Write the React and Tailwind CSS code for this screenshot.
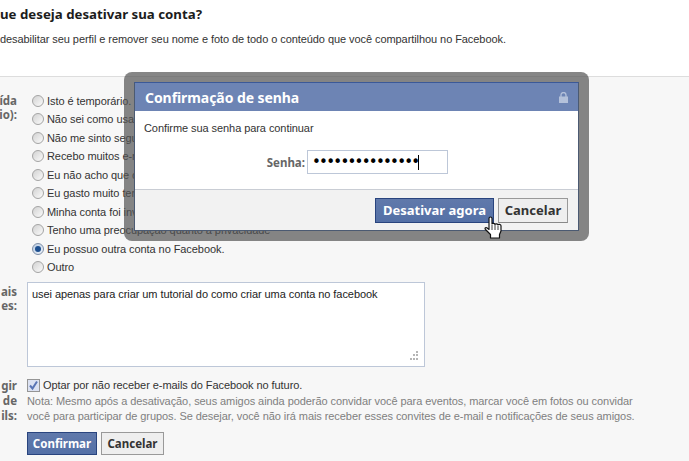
import React from "react";

const reasons = [
  "Isto é temporário. Voltarei.",
  "Não sei como usar o Facebook.",
  "Não me sinto seguro no Facebook.",
  "Recebo muitos e-mails, convites e solicitações.",
  "Eu não acho que o Facebook é útil.",
  "Eu gasto muito tempo usando o Facebook.",
  "Minha conta foi invadida.",
  "Tenho uma preocupação quanto à privacidade",
  "Eu possuo outra conta no Facebook.",
  "Outro",
];

function Radio({ checked }) {
  return (
    <span
      className={
        checked
          ? "w-[12px] h-[12px] rounded-full border border-[#7f8fa6] bg-gradient-to-br from-[#b9cbe2] to-[#eef3fa] flex items-center justify-center shrink-0"
          : "w-[12px] h-[12px] rounded-full border border-[#a4a4a4] bg-gradient-to-br from-[#d2d2d2] to-[#fbfbfb] flex items-center justify-center shrink-0"
      }
    >
      {checked && <span className="w-[6px] h-[6px] rounded-full bg-[#1c4f8f] block" />}
    </span>
  );
}

function HandCursor() {
  return (
    <svg width="19" height="23" viewBox="0 0 19 23" className="absolute left-[484px] top-[216px]">
      <path
        d="M5 2.500a1.500 1.500 0 0 1 3 0V8c0-1 3-1 3 .5 0-1 3-1 3 .5 0-1 3-.8 3 .8V15l-1.500 3.500V22H6.500V18.500L1.500 13.500c-1-1.200 0-2.500 1.300-1.700L5 13.500z"
        fill="#fff"
        stroke="#111"
        strokeWidth="1.200"
        strokeLinejoin="round"
      />
      <path d="M8 9v5M11 9v5M14 10v4" stroke="#111" strokeWidth="0.8" fill="none" />
    </svg>
  );
}

function Dialog() {
  return (
    <div className="absolute left-[124px] top-[72px] w-[465px] h-[169px] p-[10px] rounded-[8px] bg-[rgba(82,82,82,0.7)]">
      <div className="h-full flex flex-col border border-[#4b5a72] border-t-[#3b5998] bg-white">
        <div className="h-[28px] shrink-0 bg-[#6d84b4] flex items-center justify-between pl-[10px] pr-[10px]">
          <span className="font-['Noto_Sans',sans-serif] text-[14px] font-bold text-white">Confirmação de senha</span>
          <svg width="9" height="11" viewBox="0 0 9 11">
            <path d="M2 5V3a2.500 2.500 0 0 1 5 0v2" fill="none" stroke="#b4c1da" strokeWidth="1.300" />
            <rect x="0" y="4.500" width="9" height="6.500" fill="#b4c1da" />
          </svg>
        </div>
        <div className="flex-1 px-[9px] pt-[10px]">
          <p className="text-[#333] leading-[14px]">Confirme sua senha para continuar</p>
          <div className="flex items-center mt-[15px] ml-[112px]">
            <span className="font-['Noto_Sans',sans-serif] text-[11.500px] tracking-normal font-bold text-[#666] w-[49px] text-right mr-[2px] pt-[2px]">Senha:</span>
            <div className="w-[141px] h-[24px] border border-[#bdc7d8] bg-white flex items-center pl-[4px]">
              <span className="text-[15px] tracking-[-1.75px] leading-none text-black pt-[1px] font-['DejaVu_Sans',sans-serif]">•••••••••••••••</span>
              <span className="w-px h-[15px] bg-black" />
            </div>
          </div>
        </div>
        <div className="h-[41px] shrink-0 border-t border-[#c9cdd4] bg-[#f2f2f2] flex items-start justify-end gap-[4px] pr-[10px] pt-[8px]">
          <button className="h-[25px] w-[119px] border border-[#29447e] bg-gradient-to-b from-[#6079ab] to-[#5470a6] text-white tracking-normal font-['Noto_Sans',sans-serif] font-bold text-[13px]">
            Desativar agora
          </button>
          <button className="h-[25px] w-[70px] border border-[#999] border-b-[#888] bg-[#eeeeee] text-[#333] tracking-normal font-['Noto_Sans',sans-serif] font-bold text-[13px]">
            Cancelar
          </button>
        </div>
      </div>
    </div>
  );
}

export default function App() {
  return (
    <div className="relative w-[689px] h-[461px] overflow-hidden bg-[#f7f7f7] text-[11px] tracking-[-0.07px] text-[#333] font-['Liberation_Sans',sans-serif]">
      <div className="h-[77px] bg-white border-b border-[#dddddd]">
        <h2 className="font-['Noto_Sans',sans-serif] text-[13.250px] tracking-normal font-bold leading-[18px] pt-[5px] h-[23px] text-[#1c1c1c]">ue deseja desativar sua conta?</h2>
        <p className="mt-[8px] leading-[16px]">desabilitar seu perfil e remover seu nome e foto de todo o conteúdo que você compartilhou no Facebook.</p>
      </div>

      <div className="flex mt-[14.500px]">
        <div className="w-[17px] shrink-0 text-right font-['Noto_Sans',sans-serif] text-[11.500px] tracking-normal font-bold text-[#666] leading-[14px] pt-[2px] whitespace-nowrap flex flex-col items-end">
          <span>ída</span>
          <span>io):</span>
        </div>
        <div className="ml-[15px] flex flex-col">
          {reasons.map((r, i) => (
            <label key={r} className="h-[18.500px] flex items-center gap-[3px] whitespace-nowrap">
              <Radio checked={i === 8} />
              <span>{r}</span>
            </label>
          ))}
        </div>
      </div>

      <div className="flex mt-[5.500px]">
        <div className="w-[17px] shrink-0 text-right font-['Noto_Sans',sans-serif] text-[11.500px] tracking-normal font-bold text-[#666] leading-[14px] pt-[3px] flex flex-col items-end">
          <span>ais</span>
          <span>es:</span>
        </div>
        <div className="relative ml-[10px] w-[398px] h-[85px] border border-[#bdc7d8] bg-white px-[4px] pt-[3px] leading-[16px] text-[#222]">
          usei apenas para criar um tutorial do como criar uma conta no facebook
          <svg width="11" height="11" viewBox="0 0 11 11" className="absolute right-[5px] bottom-[5px]">
            <path d="M8 1h2v2H8zM5 4h2v2H5zM8 4h2v2H8zM2 8h2v2H2zM5 8h2v2H5zM8 8h2v2H8z" fill="#b5b5b5" />
          </svg>
        </div>
      </div>

      <div className="flex mt-[9px]">
        <div className="w-[17px] shrink-0 text-right font-['Noto_Sans',sans-serif] text-[11.500px] tracking-normal font-bold text-[#666] leading-[15px] flex flex-col items-end pt-[2px]">
          <span>gir</span>
          <span>de</span>
          <span>ils:</span>
        </div>
        <div className="ml-[10px]">
          <div className="flex items-center gap-[3px] h-[17px] mt-px">
            <span className="w-[13px] h-[13px] border border-[#959595] bg-[#dce2f2] flex items-center justify-center">
              <svg width="11" height="11" viewBox="0 0 11 11">
                <path d="M2 5.500 4.500 8.500 9 1.500" fill="none" stroke="#5a75b5" strokeWidth="2" />
              </svg>
            </span>
            <span>Optar por não receber e-mails do Facebook no futuro.</span>
          </div>
          <p className="text-[#808080] leading-[15px] w-[640px] whitespace-nowrap">
            Nota: Mesmo após a desativação, seus amigos ainda poderão convidar você para eventos, marcar você em fotos ou convidar
            <br />
            você para participar de grupos. Se desejar, você não irá mais receber esses convites de e-mail e notificações de seus amigos.
          </p>
          <div className="flex gap-[4px] mt-[8px]">
            <button className="h-[23px] w-[70px] border border-[#29447e] bg-gradient-to-b from-[#6079ab] to-[#5470a6] text-white tracking-normal text-[11.500px] font-['Noto_Sans',sans-serif] font-bold">
              Confirmar
            </button>
            <button className="h-[23px] w-[63px] border border-[#999] bg-[#eeeeee] text-[#333] tracking-normal text-[11.500px] font-['Noto_Sans',sans-serif] font-bold">
              Cancelar
            </button>
          </div>
        </div>
      </div>

      <Dialog />
      <HandCursor />
    </div>
  );
}
